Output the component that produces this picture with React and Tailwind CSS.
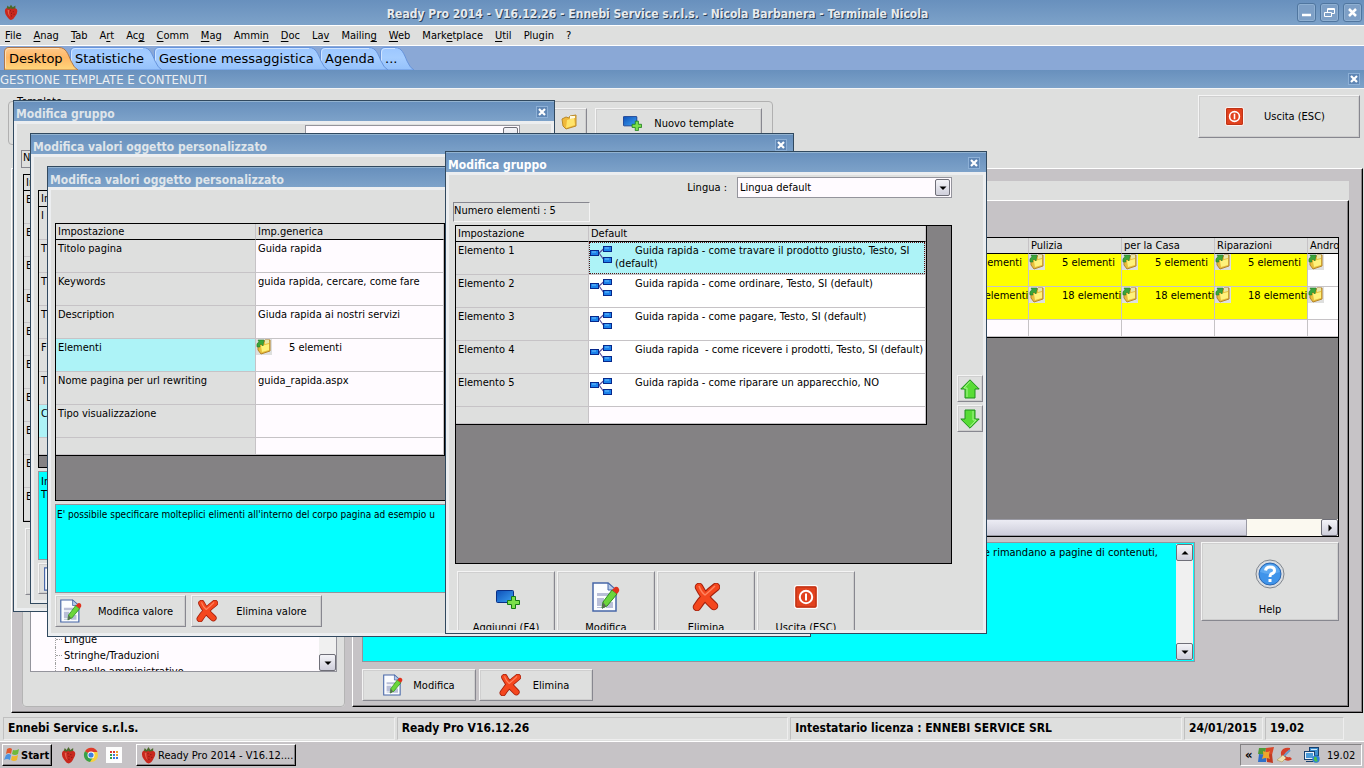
import clsx from 'clsx';

const UI_FONT = "font-['DejaVu_Sans_Condensed','DejaVu_Sans',sans-serif]";

// ---------- icons ----------

const Strawberry = ({ className }) => (
  <svg viewBox="0 0 16 18" className={className}>
    <path d="M1.500 5 Q0 9 3 13 Q6 17.500 8 17.500 Q11 17 13 13 Q16.500 8 14.500 5 Q11 2 8 4 Q4 2 1.500 5Z" fill="#c8281e" />
    <path d="M4 6 Q4 11 7 14 Q5 9 6 6Z" fill="#e4614f" />
    <path d="M3 4 L4 1 L6 3 L8 0 L10 3 L13 1 L13 4 L9 5 L8 4 L6 5Z" fill="#4a6a2c" />
    <path d="M10 8h1M8 10h1M11 11h1M8 13h1M7 7h1" stroke="#7c1010" />
  </svg>
);

const FolderIcon = ({ className }) => (
  <svg viewBox="0 0 16 16" className={className}>
    <path d="M1 5 L5 3 L8 4 L9 2 L15 1 L15 12 L5 15 L2 12Z" fill="#f0b93a" stroke="#b98a2a" />
    <path d="M6 6 L13 4 L14 11 L5 14Z" fill="#ffe46a" />
    <path d="M9 2 L14 2 L14 4 L9 5Z" fill="#fffbe0" />
  </svg>
);

const ElementsIcon = () => (
  <svg viewBox="0 0 16 16" className="size-4 shrink-0 bg-[#dedfde]">
    <path d="M2 6 L8 3 L9 1 L14 1 L14 12 L5 15 L2 11Z" fill="#e8bf3c" stroke="#b5842a" />
    <path d="M5 7 L13 5 L13 11 L6 13Z" fill="#fff27b" />
    <path d="M9 1 L13 1 L13 4 L9 5Z" fill="#e9e7a8" />
    <path d="M1 8 Q0 4 3 3 L2 1 L8 1 L7 7 L5 5 Q3 6 4 8Z" fill="#3aa53a" stroke="#1c7424" strokeWidth=".5" />
  </svg>
);

const AddIcon = ({ className }) => (
  <svg viewBox="0 0 24 19" className={className}>
    <defs>
      <linearGradient id="addBlue" x1="0" y1="0" x2="1" y2="1">
        <stop offset="0" stopColor="#0d4fb8" />
        <stop offset="1" stopColor="#3da2f2" />
      </linearGradient>
    </defs>
    <rect x=".5" y=".5" width="17" height="12" rx="1" fill="url(#addBlue)" stroke="#0a2f86" />
    <path d="M15.500 6.500h4v4h4v4h-4v4h-4v-4h-4v-4h4z" fill="#7be04a" stroke="#157a15" />
  </svg>
);

const NetworkIcon = () => (
  <svg viewBox="0 0 24 18" className="mt-[3px] h-[18px] w-6 shrink-0">
    <path d="M9 7L14 2.500M9 7L14 14" stroke="#5a4f9c" strokeWidth="1.200" />
    <g fill="#1c82ea" stroke="#06288c">
      <rect x=".5" y="4.500" width="8" height="5" />
      <rect x="13.500" y=".5" width="8" height="5" />
      <rect x="13.500" y="11.500" width="8" height="5" />
    </g>
    <path d="M2 6h4M15 2h4M15 13h4" stroke="#6fc0ff" />
  </svg>
);

const EditIcon = ({ className }) => (
  <svg viewBox="0 0 28 30" className={className}>
    <path d="M1 1H16L24 8V29H1Z" fill="#fbfdff" stroke="#4767a8" strokeWidth="1.500" />
    <path d="M16 1V8H24Z" fill="#b7cbe8" stroke="#4767a8" />
    <path d="M5 11h12v3H5zM5 16h7v8H5zM14 20h7v6h-7zM5 25h8v1H5z" fill="#b9bfd8" />
    <path d="M20 8 L25 12 L15 24 L10 26 L11 20Z" fill="#6bd63c" stroke="#2c8c1e" />
    <path d="M20 8 L23 5 Q26 4 27 7 Q28 9 25 12Z" fill="#e0321c" />
    <path d="M11 20 L14 24 L10 27Z" fill="#5c6a58" />
  </svg>
);

const DeleteIcon = ({ className }) => (
  <svg viewBox="0 0 28 28" className={className} fill="none" strokeLinejoin="round">
    <path d="M7 4Q12 14 22 23M24 4Q12 13 5 24" stroke="#a3200c" strokeWidth="8.500" strokeLinecap="round" />
    <path d="M7 4Q12 14 22 23M24 4Q12 13 5 24" stroke="#f4471e" strokeWidth="6.500" strokeLinecap="round" />
    <path d="M7 3Q9 9 13 12Q18 8 23 3" stroke="#ff8460" strokeWidth="1.500" />
  </svg>
);

const PowerIcon = ({ className }) => (
  <svg viewBox="0 0 24 24" className={className}>
    <rect x=".7" y=".7" width="22.600" height="22.600" rx="2" fill="#e2421e" stroke="#fff" strokeWidth="1.200" />
    <rect x="2" y="2" width="20" height="20" rx="1" fill="none" stroke="#b32d10" />
    <circle cx="12" cy="12" r="6.200" fill="none" stroke="#fff" strokeWidth="2" />
    <path d="M12 8.500v7" stroke="#fff" strokeWidth="2" />
  </svg>
);

const ArrowIcon = ({ down }) => (
  <svg viewBox="0 0 20 20" className={clsx('size-5', down && 'rotate-180')}>
    <path d="M10 .8L19.200 10H15V19H5V10H.8Z" fill="#58dc36" stroke="#1f8f1c" />
    <path d="M10 2.500L4 9h3v9" stroke="#a9f590" fill="none" />
  </svg>
);

const HelpIcon = () => (
  <svg viewBox="0 0 30 30" className="size-[30px]">
    <circle cx="15" cy="15" r="14" fill="#d9dde2" stroke="#80858c" />
    <circle cx="15" cy="15" r="11" fill="#3f94ea" stroke="#2a66b0" />
    <path d="M5 13 A10.300 10.300 0 0 1 25 13 Q15 17 5 13Z" fill="#79bcf8" opacity=".5" />
    <path d="M10.500 11.500 Q11 8 15 8 Q19.500 8 19.500 11.500 Q19.500 14 16 15 Q15 16 15 18" fill="none" stroke="#fff" strokeWidth="3" />
    <rect x="13.500" y="20" width="3" height="3" fill="#fff" />
  </svg>
);

const WinFlag = ({ className }) => (
  <svg viewBox="0 0 16 16" className={className}>
    <path d="M3 2Q6 0 8 2L7 7Q5 5 2 7Z" fill="#e2582c" />
    <path d="M9 3Q12 4 15 2L14 7Q11 9 8 7Z" fill="#6fb93c" />
    <path d="M2 8Q5 6 7 8L6 13Q3 11 0 13Z" fill="#4c93e0" />
    <path d="M8 9Q11 10 14 8L13 13Q10 15 7 13Z" fill="#f0b82c" />
  </svg>
);

const ChromeIcon = () => (
  <svg viewBox="0 0 16 16" className="size-4">
    <circle cx="8" cy="8" r="7" fill="#f7d13c" />
    <path d="M8 8L2 4.300A7 7 0 0 1 14.500 5L8 5Z" fill="#df3b2c" />
    <path d="M8 8L2 4.300A7 7 0 0 0 7 15L10.500 9.500Z" fill="#39a04a" />
    <circle cx="8" cy="8" r="3.500" fill="#fff" />
    <circle cx="8" cy="8" r="2.600" fill="#3d7fe0" />
  </svg>
);

const AppGridIcon = () => (
  <svg viewBox="0 0 16 16" className="size-4">
    <rect width="16" height="16" fill="#fdfdfd" />
    <path d="M4 4h2v2h-2zM7 4h2v2h-2z" fill="#d8382c" />
    <path d="M10 4h2v2h-2zM10 7h2v2h-2z" fill="#e8a02c" />
    <path d="M4 7h2v2h-2zM4 10h2v2h-2z" fill="#2f9c48" />
    <path d="M7 7h2v2h-2zM7 10h2v2h-2zM10 10h2v2h-2z" fill="#3b78dc" />
  </svg>
);

const ShieldIcon = () => (
  <svg viewBox="0 0 16 16" className="size-4">
    <path d="M1 1L8 1L7 8L0 7Z" fill="#4e9a3a" />
    <path d="M8 1L16 0L14 8L7 8Z" fill="#d8482a" />
    <path d="M1 7L8 8L8 15L0 15Z" fill="#2f6fc8" />
    <path d="M8 8L14 7L15 16L9 15Z" fill="#c23a20" />
    <path d="M5 4Q9 6 12 4Q10 8 12 12Q8 10 4 12Q6 8 5 4Z" fill="#eda52c" />
  </svg>
);

const CleanerIcon = () => (
  <svg viewBox="0 0 16 16" className="size-4">
    <path d="M13 1Q6 0 4 5Q3 10 8 13Q12 15 15 12L13 10Q9 11 8 8Q8 4 13 4Z" fill="#d4402a" />
    <path d="M0 13L6 8L9 11L5 15Z" fill="#efe2b4" stroke="#b09850" strokeWidth=".6" />
    <path d="M7 9L13 3" stroke="#6d9ac8" strokeWidth="2" />
  </svg>
);

const LanIcon = () => (
  <svg viewBox="0 0 16 16" className="size-4">
    <rect x="5.500" y=".5" width="9" height="8" fill="#3f8fd0" stroke="#17406e" />
    <path d="M7 2h6v1H7z" fill="#cfe8f8" />
    <rect x="1.500" y="5.500" width="8" height="6" fill="#4b9ad8" stroke="#e8f0f8" />
    <rect x=".5" y="4.500" width="10" height="8" fill="none" stroke="#17406e" />
    <path d="M2 14.500h7" stroke="#17406e" />
    <circle cx="12" cy="12" r="3.700" fill="#2f7fd8" />
    <path d="M10 10Q12 9 13 11Q12 13 14 14Q11 16 10 13Z" fill="#4cc048" />
  </svg>
);

const CloseX = () => (
  <svg viewBox="0 0 8 8" className="size-2">
    <path d="M1 1L7 7M7 1L1 7" stroke="#fff" strokeWidth="2.200" />
  </svg>
);

const Triangle = ({ className }) => (
  <svg viewBox="0 0 8 8" className={clsx('size-2', className)}>
    <path d="M.5 2.500H7.500L4 6Z" fill="#000" />
  </svg>
);

// ---------- shared controls ----------

const BevelButton = ({ className, children }) => (
  <button
    type="button"
    className={clsx(
      'border border-t-[#f4f4f4] border-l-[#f4f4f4] border-r-[#87878f] border-b-[#87878f] bg-[#dedfde] shadow-[inset_1px_1px_0_#cfcfcf,inset_-1px_-1px_0_#cdcdcd]',
      className
    )}
  >
    {children}
  </button>
);

const ArrowButton = ({ label, rotate }) => (
  <button
    type="button"
    aria-label={label}
    className="flex size-[17px] shrink-0 items-center justify-center rounded-xs border border-[#6f6f78] bg-linear-to-b from-[#f4f4f8] to-[#cfcfdb]"
  >
    <Triangle className={rotate} />
  </button>
);

const LinguaSelect = ({ id, className }) => (
  <div className={clsx('relative', className)}>
    <select id={id} aria-label="Lingua" className="h-full w-full appearance-none border border-[#94949c] bg-[#fffbff] px-[2px]">
      <option>Lingua default</option>
    </select>
    <span className="pointer-events-none absolute inset-y-[2px] right-[2px] flex w-[15px] items-center justify-center rounded-xs border border-[#6f6f78] bg-linear-to-b from-[#f4f4f8] to-[#cfcfdb]">
      <Triangle />
    </span>
  </div>
);

const Window = ({ title, active, className, children }) => (
  <section className={clsx('absolute flex flex-col overflow-hidden border border-[#31495f] bg-[#dedfde]', className)}>
    <header
      className={clsx(
        'flex h-5 shrink-0 items-center justify-between border-t border-[#93b3d0] bg-linear-to-b from-[#6890bd] to-[#7da2c9] pr-[6px] pl-[2px]',
        active ? 'text-white' : 'text-[#dfe5ea]'
      )}
    >
      <h2 className="pt-1 text-[12px] leading-4 font-bold whitespace-nowrap">{title}</h2>
      <button type="button" aria-label="Chiudi" className="flex size-3 items-center justify-center border border-[#8db0d6] bg-[#5f86b4]">
        <CloseX />
      </button>
    </header>
    <div className="min-h-0 flex-1 overflow-hidden border-3 border-[#eceef0]">{children}</div>
  </section>
);

const HEAD = 'h-4 border-b border-black border-r border-r-[#c6c3c6] bg-[#dedfde] px-[2px] py-0 text-left align-middle font-normal';
const CELL = 'border-r border-b border-[#c6c3c6] px-[2px] pt-[2px] align-top whitespace-nowrap overflow-hidden';

const SettingsTable = ({ rows, selected, valueHead, className, firstCol }) => (
  <table className={clsx('table-fixed border-separate border-spacing-0 border-r border-b border-black', className)}>
    <thead>
      <tr>
        <th className={clsx(HEAD, firstCol)}>Impostazione</th>
        <th className={HEAD}>{valueHead}</th>
      </tr>
    </thead>
    <tbody>
      {rows.map(([name, value], i) => (
        <tr key={i} className={name ? 'h-[33px]' : 'h-[17px]'}>
          <td className={clsx(CELL, name === selected ? 'bg-[#adf3f7]' : 'bg-[#dedfde]')}>{name}</td>
          <td className={clsx(CELL, 'bg-[#fffbff]')}>{value}</td>
        </tr>
      ))}
    </tbody>
  </table>
);

// ---------- data ----------

// [before, underlined letter, after]
const menuItems = [
  ['', 'F', 'ile'], ['', 'A', 'nag'], ['', 'T', 'ab'], ['A', 'r', 't'], ['Ac', 'g', ''], ['', 'C', 'omm'],
  ['', 'M', 'ag'], ['Ammi', 'n', ''], ['', 'D', 'oc'], ['La', 'v', ''], ['Mailin', 'g', ''], ['', 'W', 'eb'],
  ['Mark', 'e', 'tplace'], ['', 'U', 'til'], ['Plugin', '', ''], ['?', '', ''],
];

const tabs = [
  { label: 'Desktop', w: 74, cls: 'z-50 w-[74px]', active: true },
  { label: 'Statistiche', w: 92, cls: 'z-40 -ml-2 w-[92px]' },
  { label: 'Gestione messaggistica', w: 174, cls: 'z-30 -ml-2 w-[174px]' },
  { label: 'Agenda', w: 68, cls: 'z-20 -ml-2 w-[68px]' },
  { label: '...', w: 34, cls: 'z-10 -ml-2 w-[34px]' },
];

const pageRows = [
  ['Titolo pagina', 'Guida rapida'],
  ['Keywords', 'guida rapida, cercare, come fare'],
  ['Description', 'Giuda rapida ai nostri servizi'],
  ['Elementi', <span key="el" className="-mt-[2px] -ml-[2px] flex"><ElementsIcon /><span className="pt-[2px] pl-[17px]">5 elementi</span></span>],
  ['Nome pagina per url rewriting', 'guida_rapida.aspx'],
  ['Tipo visualizzazione', ''],
  ['', ''],
];

const objectRows = [['I', ''], ['T', ''], ['T', ''], ['T', ''], ['F', ''], ['T', ''], ['C', ''], ['', '']];

const groupRows = Array.from({ length: 10 }, () => ['E', '']);

const elements = [
  'Guida rapida - come travare il prodotto giusto, Testo, SI (default)',
  'Guida rapida - come ordinare, Testo, SI (default)',
  'Guida rapida - come pagare, Testo, SI (default)',
  'Giuda rapida  - come ricevere i prodotti, Testo, SI (default)',
  'Guida rapida - come riparare un apparecchio, NO',
];

const siteColumns = ['', 'Pulizia', 'per la Casa', 'Riparazioni', 'Andro'];

// ---------- page sections ----------

const Tab = ({ label, w, cls, active }) => (
  <button type="button" className={clsx('relative h-[23px] shrink-0 pl-[5px] text-left', cls)}>
    <svg viewBox={`0 0 ${w} 23`} className="absolute inset-0 h-full w-full">
      <defs>
        <linearGradient id={`tab${w}`} x1="0" y1="0" x2="0" y2="1">
          <stop offset="0" stopColor={active ? '#ffc98a' : '#9cc7ff'} />
          <stop offset=".45" stopColor={active ? '#ffb765' : '#a5cdff'} />
          <stop offset="1" stopColor={active ? '#ffd77c' : '#94c1fb'} />
        </linearGradient>
      </defs>
      <path
        d={`M.5 23V5Q.5 .5 5 .5H${w - 19}C${w - 12} .5 ${w - 10} 7 ${w - 7} 14Q${w - 4} 21 ${w} 23Z`}
        fill={`url(#tab${w})`}
        stroke={active ? '#b0784a' : '#6794dc'}
      />
      <path d={`M1.500 21V5Q1.500 1.500 5 1.500H${w - 19}`} fill="none" stroke={active ? '#ffe0b8' : '#cfe4ff'} />
    </svg>
    <span className="relative font-['DejaVu_Sans',sans-serif] text-[13px] leading-6 whitespace-nowrap">{label}</span>
  </button>
);

const TopBars = () => (
  <>
    <header className="flex h-[26px] shrink-0 items-center border-b border-white bg-linear-to-b from-[#6890bd] to-[#7da2c9] pl-1">
      <Strawberry className="h-[17px] w-[14px]" />
      <h1 className="flex-1 pt-[3px] text-center text-[12px] leading-4 font-bold text-[#e6eaee] [text-shadow:1px_1px_0_#2b4058]">
        Ready Pro 2014 - V16.12.26 - Ennebi Service s.r.l.s. - Nicola Barbanera - Terminale Nicola
      </h1>
      <div className="flex gap-1 pr-[2px]">
        <button type="button" aria-label="Riduci" className="size-[19px] rounded-[3px] border border-[#50769f] bg-[#7d9fc6] shadow-[inset_0_0_0_1px_#8fb0d2]">
          <svg viewBox="0 0 17 17"><path d="M4 11h9" stroke="#fff" strokeWidth="2.500" /></svg>
        </button>
        <button type="button" aria-label="Ripristina" className="size-[19px] rounded-[3px] border border-[#50769f] bg-[#7d9fc6] shadow-[inset_0_0_0_1px_#8fb0d2]">
          <svg viewBox="0 0 17 17" fill="none" stroke="#fff"><path d="M6.500 8V4.500H13.500V9.500H11M3.500 8.500H10.500V12.500H3.500ZM6.500 5.500H13.500" /></svg>
        </button>
        <button type="button" aria-label="Chiudi" className="size-[19px] rounded-[3px] border border-[#50769f] bg-[#7d9fc6] shadow-[inset_0_0_0_1px_#8fb0d2]">
          <svg viewBox="0 0 17 17"><path d="M5 5L12 12M12 5L5 12" stroke="#fff" strokeWidth="2.500" /></svg>
        </button>
      </div>
    </header>
    <nav className="flex h-5 shrink-0 items-center gap-3 border-b border-white bg-[#dedfde] pl-[5px]">
      {menuItems.map(([a, u, b]) => (
        <button type="button" key={a + u + b} className="underline-offset-2">
          {a}
          <u>{u}</u>
          {b}
        </button>
      ))}
    </nav>
    <div className="flex h-6 shrink-0 items-end bg-[#8aa8d6] pl-1">
      {tabs.map((t) => (
        <Tab key={t.label} {...t} />
      ))}
    </div>
    <div className="flex h-[19px] shrink-0 items-center justify-between border-b border-[#f4f4f4] bg-linear-to-b from-[#6890bd] to-[#7da2c9] pr-1">
      <h2 className="pt-[2px] text-[13px] leading-4 text-[#eceff2]">GESTIONE TEMPLATE E CONTENUTI</h2>
      <button type="button" aria-label="Chiudi" className="flex size-3 items-center justify-center border border-[#8db0d6] bg-[#5f86b4]">
        <CloseX />
      </button>
    </div>
  </>
);

const Workspace = () => (
  <main className="flex flex-1 flex-col bg-[#dedfde] pb-[2px]">
    <div className="flex h-[79px] shrink-0 items-start justify-between pt-[6px] pr-1 pl-2">
      <fieldset className="h-[50px] w-[765px] rounded-sm border border-[#b0b0b0] pl-2">
        <legend className="leading-[13px]">Template</legend>
        <div className="flex justify-end gap-2 pr-[10px]">
          <BevelButton className="flex h-7 w-9 items-center justify-center">
            <FolderIcon className="size-4" />
          </BevelButton>
          <BevelButton className="flex h-[30px] w-[167px] items-center justify-center gap-3">
            <AddIcon className="h-[15px] w-[19px]" />
            Nuovo template
          </BevelButton>
        </div>
      </fieldset>
      <BevelButton className="flex h-[43px] w-[162px] items-center justify-center gap-5 pr-2">
        <PowerIcon className="size-[19px]" />
        Uscita (ESC)
      </BevelButton>
    </div>

    <div className="mr-px ml-[11px] flex flex-1 gap-[7px] border-t border-l border-r border-b border-t-white border-l-white border-r-black border-b-black bg-[#c6c3c6] pt-3 pr-[13px] pb-[5px] pl-[10px] shadow-[inset_-1px_-1px_0_#848284]">
      {/* Tree */}
      <fieldset className="flex w-[323px] shrink-0 flex-col rounded-sm border border-[#b4b4b4] bg-[#dedfde] px-[7px] pb-[34px]">
        <div className="flex flex-1 overflow-hidden border border-[#94949c] bg-[#fffbff]">
          <div className="flex flex-1 flex-col justify-end pl-6">
            <ul className="-mb-2">
              {['Lingue', 'Stringhe/Traduzioni', 'Pannello amministrativo'].map((item) => (
                <li key={item} className="flex h-4 items-center gap-[2px] border-l border-dotted border-[#a0a0a0]">
                  <span className="w-[6px] border-t border-dotted border-[#a0a0a0]" />
                  {item}
                </li>
              ))}
            </ul>
          </div>
          <div className="flex flex-col justify-end bg-[#f0f0f0]">
            <ArrowButton label="Scorri in basso" />
          </div>
        </div>
      </fieldset>

      <div className="flex min-w-0 flex-1 flex-col">
        <div className="h-[19px] shrink-0 bg-[#dedfde]" />
        <div className="flex flex-1 flex-col border border-t-white border-l-white border-r-black border-b-black px-[9px] pt-9 pb-[5px] shadow-[inset_-1px_-1px_0_#848284]">
          <div className="flex flex-1 flex-col overflow-hidden border border-black bg-[#848284]">
            <div className="min-h-0 flex-1 overflow-hidden">
              <table className="w-[1038px] table-fixed border-separate border-spacing-0 border-b border-black">
                <thead>
                  <tr>
                    <th className={clsx(HEAD, 'w-[573px]')} />
                    {siteColumns.map((c, i) => (
                      <th key={i} className={clsx(HEAD, 'w-[93px]')}>{c}</th>
                    ))}
                  </tr>
                </thead>
                <tbody>
                  {[5, 18].map((n) => (
                    <tr key={n} className="h-[33px]">
                      <td className={clsx(CELL, 'bg-[#dedfde]')} />
                      {siteColumns.map((c, i) => (
                        <td key={i} className={clsx('overflow-hidden border-r border-b border-[#c6c3c6] p-0 align-top whitespace-nowrap', i < 4 ? 'bg-[#ffff00]' : 'bg-white')}>
                          <div className="flex">
                            <ElementsIcon />
                            <span className="pt-[2px] pl-[17px]">{i < 4 && `${n} elementi`}</span>
                          </div>
                        </td>
                      ))}
                    </tr>
                  ))}
                  <tr className="h-[17px]">
                    <td className={clsx(CELL, 'bg-[#dedfde]')} />
                    {siteColumns.map((c, i) => (
                      <td key={i} className={clsx(CELL, 'bg-[#fffbff]')} />
                    ))}
                  </tr>
                </tbody>
              </table>
            </div>
            <div className="flex h-[17px] shrink-0 justify-end bg-[#fbf9f0]">
              <div className="mr-[74px] flex-1 border border-[#9a9aa4] bg-linear-to-b from-[#ececf4] to-[#cdcdda]" />
              <ArrowButton label="Scorri a destra" rotate="-rotate-90" />
            </div>
          </div>

          <div className="mt-[5px] flex h-[120px] shrink-0 gap-[6px]">
            <div className="flex flex-1 border border-[#94949c] bg-[#00ffff]">
              <p className="flex-1 pt-[3px] pr-[18px] text-right leading-[13px]">e rimandano a pagine di contenuti,</p>
              <div className="my-px mr-px flex flex-col justify-between bg-[#f0f0f0]">
                <ArrowButton label="Scorri in alto" rotate="rotate-180" />
                <ArrowButton label="Scorri in basso" />
              </div>
            </div>
            <BevelButton className="flex h-[79px] w-[138px] flex-col items-center justify-center gap-[14px] pt-3">
              <HelpIcon />
              Help
            </BevelButton>
          </div>

          <div className="mt-[7px] flex gap-[3px]">
            <BevelButton className="flex h-8 w-[114px] items-center justify-center gap-[10px]">
              <EditIcon className="h-6 w-5" />
              Modifica
            </BevelButton>
            <BevelButton className="flex h-8 w-[114px] items-center justify-center gap-3 pr-1">
              <DeleteIcon className="size-[22px]" />
              Elimina
            </BevelButton>
          </div>
        </div>
      </div>
    </div>
  </main>
);

const GroupWindowBack = () => (
  <Window title="Modifica gruppo" className="top-[100px] left-[13px] h-[512px] w-[542px]">
    <div className="flex justify-end pt-px pr-[31px]">
      <LinguaSelect id="lingua-back" className="h-6 w-[215px]" />
    </div>
    <div className="mt-px ml-1 h-[18px] w-[137px] border border-[#87878f] px-px">N</div>
    <div className="mt-[6px] ml-[6px] w-[490px] border-t border-l border-black bg-[#848284]">
      <SettingsTable rows={groupRows} valueHead="" firstCol="w-[133px]" className="w-[471px]" />
    </div>
    <BevelButton className="mt-[6px] ml-2 h-[67px] w-[98px]" />
  </Window>
);

const ObjectWindowBack = () => (
  <Window title="Modifica valori oggetto personalizzato" className="top-[133px] left-[30px] h-[471px] w-[764px]">
    <div className="mt-[33px] ml-1 flex h-[278px] flex-col border border-black bg-[#848284]">
      <SettingsTable rows={objectRows} selected="C" valueHead="" firstCol="w-[200px]" className="w-[389px]" />
    </div>
    <div className="mt-[3px] ml-1 h-[89px] border border-[#94949c] bg-[#00ffff] px-[2px] pt-[3px] leading-[13px]">
      In
      <br />
      T
    </div>
    <BevelButton className="mt-[3px] ml-1 flex h-[31px] w-[131px] items-center pl-1">
      <EditIcon className="h-6 w-6" />
    </BevelButton>
  </Window>
);

const ObjectWindow = () => (
  <Window title="Modifica valori oggetto personalizzato" className="top-[166px] left-[47px] h-[471px] w-[764px]">
    <div className="mt-[33px] ml-1 h-[278px] border border-black bg-[#848284]">
      <SettingsTable rows={pageRows} selected="Elementi" valueHead="Imp.generica" firstCol="w-[200px]" className="w-[389px]" />
    </div>
    <textarea
      readOnly
      aria-label="Descrizione"
      className="mt-[3px] ml-1 block h-[89px] w-[744px] resize-none border border-[#94949c] bg-[#00ffff] px-px pt-[3px] text-[10px] leading-[13px]"
      value="E' possibile specificare molteplici elimenti all'interno del corpo pagina ad esempio u"
    />
    <div className="mt-[2px] ml-1 flex gap-[5px]">
      <BevelButton className="flex h-8 w-[131px] items-center pl-1">
        <EditIcon className="h-6 w-[22px]" />
        <span className="flex-1 pl-1">Modifica valore</span>
      </BevelButton>
      <BevelButton className="flex h-8 w-[131px] items-center pl-1">
        <DeleteIcon className="size-[22px]" />
        <span className="flex-1 pl-1">Elimina valore</span>
      </BevelButton>
    </div>
  </Window>
);

const GroupWindow = () => (
  <Window title="Modifica gruppo" active className="top-[151px] left-[445px] h-[483px] w-[542px]">
    <div className="flex items-center justify-end gap-[10px] pt-[2px] pr-[31px]">
      <label htmlFor="lingua">Lingua :</label>
      <LinguaSelect id="lingua" className="h-[21px] w-[215px]" />
    </div>
    <div className="mt-1 ml-1 h-5 w-[137px] border border-t-[#87878f] border-l-[#87878f] border-r-[#f4f4f4] border-b-[#f4f4f4] leading-4">
      Numero elementi : 5
    </div>
    <div className="flex">
      <div className="mt-[3px] ml-[6px] h-[339px] w-[497px] shrink-0 border border-black bg-[#848284]">
        <table className="w-[471px] table-fixed border-separate border-spacing-0 border-r border-b border-black">
          <thead>
            <tr>
              <th className={clsx(HEAD, 'w-[133px]')}>Impostazione</th>
              <th className={HEAD}>Default</th>
            </tr>
          </thead>
          <tbody>
            {elements.map((text, i) => (
              <tr key={text} className="h-[33px]">
                <td className={clsx(CELL, 'bg-[#dedfde]')}>Elemento {i + 1}</td>
                <td className={clsx('border-r border-b border-[#c6c3c6] p-0 align-top leading-[13px]', i === 0 ? 'bg-[#adf3f7]' : 'bg-white')}>
                  <div className={clsx('flex h-8 border', i === 0 ? 'border-dotted border-[#5a1010]' : 'border-transparent')}>
                    <NetworkIcon />
                    <p className="pt-px pl-px indent-5 whitespace-pre-wrap">{text}</p>
                  </div>
                </td>
              </tr>
            ))}
            <tr className="h-[17px]">
              <td className={clsx(CELL, 'bg-[#dedfde]')} />
              <td className={clsx(CELL, 'bg-[#fffbff]')} />
            </tr>
          </tbody>
        </table>
      </div>
      <div className="flex flex-1 flex-col items-end gap-[3px] pt-[153px]">
        <BevelButton className="flex h-[27px] w-[26px] items-center justify-center">
          <ArrowIcon />
        </BevelButton>
        <BevelButton className="flex h-[27px] w-[26px] items-center justify-center">
          <ArrowIcon down />
        </BevelButton>
      </div>
    </div>
    <div className="mt-[7px] ml-2 flex gap-[2px]">
      <BevelButton className="flex h-[79px] w-[98px] flex-col items-center pt-[18px]">
        <AddIcon className="ml-1 h-[19px] w-6" />
        <span className="mt-3">Aggiungi (F4)</span>
      </BevelButton>
      <BevelButton className="flex h-[79px] w-[98px] flex-col items-center pt-[10px]">
        <EditIcon className="h-[30px] w-7" />
        <span className="mt-[9px]">Modifica</span>
      </BevelButton>
      <BevelButton className="flex h-[79px] w-[98px] flex-col items-center pt-[11px]">
        <DeleteIcon className="size-7" />
        <span className="mt-[10px]">Elimina</span>
      </BevelButton>
      <BevelButton className="flex h-[79px] w-[98px] flex-col items-center pt-[13px]">
        <PowerIcon className="size-6" />
        <span className="mt-3">Uscita (ESC)</span>
      </BevelButton>
    </div>
  </Window>
);

const StatusBar = () => {
  const panel = 'flex items-center border border-t-[#c0c0c0] border-l-[#c0c0c0] border-r-[#eeeeee] border-b-[#eeeeee] pl-1 whitespace-nowrap';
  return (
    <footer className="flex h-[27px] shrink-0 gap-[2px] border-b border-white bg-[#dedfde] pt-[2px] pr-5 pb-px pl-[3px] text-[12px] font-bold">
      <div className={clsx(panel, 'flex-1')}>Ennebi Service s.r.l.s.</div>
      <div className={clsx(panel, 'flex-1')}>Ready Pro V16.12.26</div>
      <div className={clsx(panel, 'flex-1')}>Intestatario licenza : ENNEBI SERVICE SRL</div>
      <div className={clsx(panel, 'w-[79px]')}>24/01/2015</div>
      <div className={clsx(panel, 'w-[79px]')}>19.02</div>
    </footer>
  );
};

const Taskbar = () => (
  <div className="flex h-[26px] shrink-0 items-center bg-[#c6c3c6] px-[2px]">
    <button type="button" className="flex h-[22px] w-[50px] items-center gap-px border border-t-white border-l-white border-r-black border-b-black pl-px font-bold shadow-[inset_-1px_-1px_0_#848284]">
      <WinFlag className="size-4" />
      Start
    </button>
    <div className="ml-[9px] flex items-center gap-[7px]">
      <Strawberry className="h-[17px] w-[15px]" />
      <ChromeIcon />
      <AppGridIcon />
    </div>
    <button type="button" className="ml-[14px] flex h-[22px] w-[160px] items-center gap-[2px] border border-t-white border-l-white border-r-black border-b-black pl-1 whitespace-nowrap shadow-[inset_-1px_-1px_0_#848284]">
      <Strawberry className="h-[17px] w-[15px] shrink-0" />
      Ready Pro 2014 - V16.12....
    </button>
    <div className="ml-auto flex h-[22px] w-[122px] items-center border border-t-[#848284] border-l-[#848284] border-r-white border-b-white pl-1">
      <span className="w-[13px] text-[13px] leading-4 font-bold">«</span>
      <ShieldIcon />
      <span className="ml-[3px]">
        <CleanerIcon />
      </span>
      <span className="ml-[11px]">
        <LanIcon />
      </span>
      <span className="ml-[7px]">19.02</span>
    </div>
  </div>
);

export default function App() {
  return (
    <div className={clsx('relative flex min-h-screen flex-col overflow-hidden text-[11px] leading-[13px] text-black', UI_FONT)}>
      <TopBars />
      <Workspace />
      <GroupWindowBack />
      <ObjectWindowBack />
      <ObjectWindow />
      <GroupWindow />
      <StatusBar />
      <Taskbar />
    </div>
  );
}
